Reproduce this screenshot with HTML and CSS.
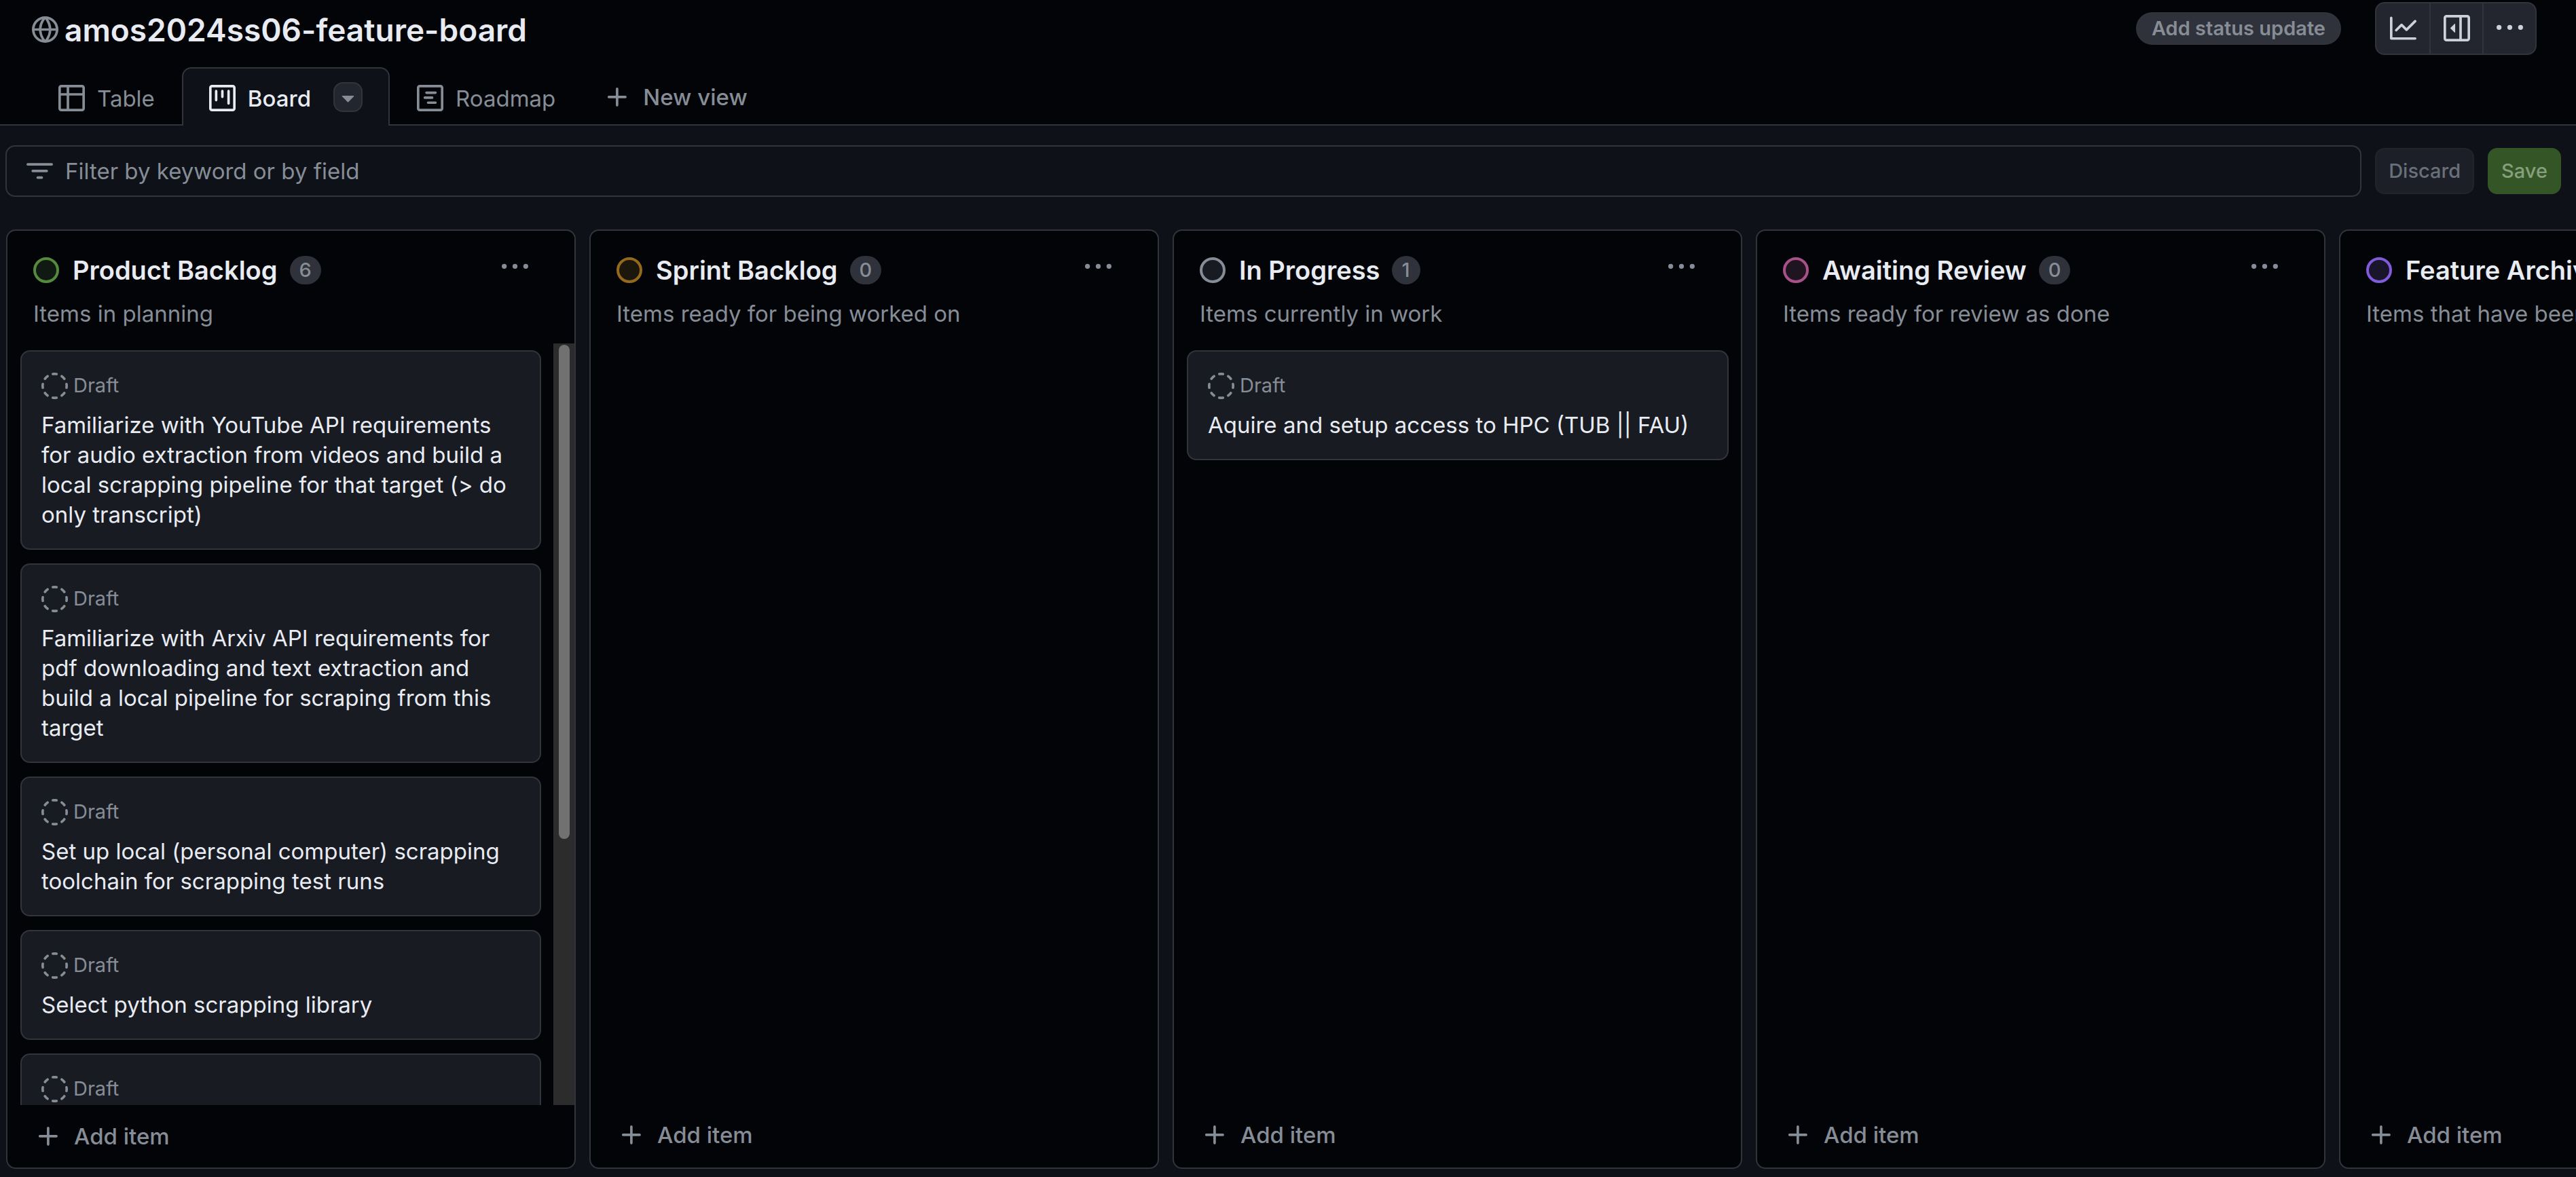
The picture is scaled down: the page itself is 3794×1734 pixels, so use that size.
FILE: index.html
```
<!DOCTYPE html>
<html lang="en">
<head>
<meta charset="utf-8">
<title>amos2024ss06-feature-board</title>
<link rel="stylesheet" href="styles.css">
</head>
<body>
<svg class="sprite" aria-hidden="true">
  <symbol id="i-globe" viewBox="0 0 16 16"><path d="M8 0a8 8 0 1 1 0 16A8 8 0 0 1 8 0ZM5.78 8.75a9.64 9.64 0 0 0 1.363 4.177c.255.426.542.832.857 1.215.245-.296.551-.705.857-1.215A9.64 9.64 0 0 0 10.22 8.75Zm4.44-1.5a9.64 9.64 0 0 0-1.363-4.177c-.307-.51-.612-.919-.857-1.215a9.927 9.927 0 0 0-.857 1.215A9.64 9.64 0 0 0 5.78 7.25Zm-5.944 1.5H1.543a6.507 6.507 0 0 0 4.666 5.5c-.123-.181-.24-.365-.352-.552-.715-1.192-1.437-2.874-1.581-4.948Zm-2.733-1.5h2.733c.144-2.074.866-3.756 1.58-4.948.12-.197.237-.381.353-.552a6.507 6.507 0 0 0-4.666 5.5Zm10.181 1.5c-.144 2.074-.866 3.756-1.58 4.948-.12.197-.237.381-.353.552a6.507 6.507 0 0 0 4.666-5.5Zm2.733-1.5a6.507 6.507 0 0 0-4.666-5.5c.123.181.24.365.353.552.714 1.192 1.436 2.874 1.58 4.948Z"/></symbol>
  <symbol id="i-table" viewBox="0 0 16 16"><path d="M0 1.75C0 .784.784 0 1.75 0h12.5C15.216 0 16 .784 16 1.75v12.5A1.75 1.75 0 0 1 14.25 16H1.75A1.75 1.75 0 0 1 0 14.25ZM6.5 6.5v8h7.75a.25.25 0 0 0 .25-.25V6.5Zm8-1.5V1.75a.25.25 0 0 0-.25-.25H6.5V5Zm-13 1.5v7.75c0 .138.112.25.25.25H5v-8ZM5 5V1.5H1.75a.25.25 0 0 0-.25.25V5Z"/></symbol>
  <symbol id="i-board" viewBox="0 0 16 16"><path d="M1.75 0h12.5C15.216 0 16 .784 16 1.75v12.5A1.75 1.75 0 0 1 14.25 16H1.75A1.75 1.75 0 0 1 0 14.25V1.75C0 .784.784 0 1.75 0ZM1.5 1.75v12.5c0 .138.112.25.25.25h12.5a.25.25 0 0 0 .25-.25V1.75a.25.25 0 0 0-.25-.25H1.75a.25.25 0 0 0-.25.25ZM11.75 3a.75.75 0 0 1 .75.75v7.5a.75.75 0 0 1-1.5 0v-7.5a.75.75 0 0 1 .75-.75Zm-8.25.75a.75.75 0 0 1 1.5 0v5.5a.75.75 0 0 1-1.5 0ZM8 3a.75.75 0 0 1 .75.75v3.5a.75.75 0 0 1-1.5 0v-3.5A.75.75 0 0 1 8 3Z"/></symbol>
  <symbol id="i-roadmap" viewBox="0 0 16 16"><path d="M4.75 7a.75.75 0 0 0 0 1.5h4.5a.75.75 0 0 0 0-1.5h-4.5ZM5 4.75A.75.75 0 0 1 5.75 4h5.5a.75.75 0 0 1 0 1.5h-5.5A.75.75 0 0 1 5 4.75ZM6.75 10a.75.75 0 0 0 0 1.5h4.5a.75.75 0 0 0 0-1.5h-4.5ZM0 1.75C0 .784.784 0 1.75 0h12.5C15.216 0 16 .784 16 1.75v12.5A1.75 1.75 0 0 1 14.25 16H1.75A1.75 1.75 0 0 1 0 14.25Zm1.75-.25a.25.25 0 0 0-.25.25v12.5c0 .138.112.25.25.25h12.5a.25.25 0 0 0 .25-.25V1.75a.25.25 0 0 0-.25-.25Z"/></symbol>
  <symbol id="i-plus" viewBox="0 0 16 16"><path d="M7.75 2a.75.75 0 0 1 .75.75V7h4.25a.75.75 0 0 1 0 1.5H8.5v4.25a.75.75 0 0 1-1.5 0V8.5H2.75a.75.75 0 0 1 0-1.5H7V2.75A.75.75 0 0 1 7.75 2Z"/></symbol>
  <symbol id="i-caret" viewBox="0 0 16 16"><path d="m4.427 7.427 3.396 3.396a.25.25 0 0 0 .354 0l3.396-3.396A.25.25 0 0 0 11.396 7H4.604a.25.25 0 0 0-.177.427Z"/></symbol>
  <symbol id="i-filter" viewBox="0 0 16 16"><path d="M.75 3h14.5a.75.75 0 0 1 0 1.5H.75a.75.75 0 0 1 0-1.5ZM3 7.75A.75.75 0 0 1 3.75 7h8.5a.75.75 0 0 1 0 1.5h-8.5A.75.75 0 0 1 3 7.75Zm3 4a.75.75 0 0 1 .75-.75h2.5a.75.75 0 0 1 0 1.5h-2.5a.75.75 0 0 1-.75-.75Z"/></symbol>
  <symbol id="i-graph" viewBox="0 0 16 16"><path d="M1.5 1.75V13.5h13.75a.75.75 0 0 1 0 1.5H.75a.75.75 0 0 1-.75-.75V1.75a.75.75 0 0 1 1.5 0Zm14.28 2.53-5.25 5.25a.75.75 0 0 1-1.06 0L7 7.06 4.28 9.78a.751.751 0 0 1-1.042-.018.751.751 0 0 1-.018-1.042l3.25-3.25a.75.75 0 0 1 1.06 0L10 7.94l4.72-4.72a.751.751 0 0 1 1.042.018.751.751 0 0 1 .018 1.042Z"/></symbol>
  <symbol id="i-sidebar" viewBox="0 0 16 16"><path d="m4.177 7.823 2.396-2.396A.25.25 0 0 1 7 5.604v4.792a.25.25 0 0 1-.427.177L4.177 8.177a.25.25 0 0 1 0-.354Z"/><path d="M0 1.75C0 .784.784 0 1.75 0h12.5C15.216 0 16 .784 16 1.75v12.5A1.75 1.75 0 0 1 14.25 16H1.75A1.75 1.75 0 0 1 0 14.25Zm1.75-.25a.25.25 0 0 0-.25.25v12.5c0 .138.112.25.25.25H9.5v-13Zm12.5 13a.25.25 0 0 0 .25-.25V1.75a.25.25 0 0 0-.25-.25H11v13Z"/></symbol>
  <symbol id="i-dots" viewBox="0 0 16 16"><path d="M8 9a1.5 1.5 0 1 0 0-3 1.5 1.5 0 0 0 0 3ZM1.5 9a1.5 1.5 0 1 0 0-3 1.5 1.5 0 0 0 0 3Zm13 0a1.5 1.5 0 1 0 0-3 1.5 1.5 0 0 0 0 3Z"/></symbol>
  <symbol id="i-draft" viewBox="0 0 16 16"><path d="M14.307 11.655a.75.75 0 0 1 .165 1.048 8.05 8.05 0 0 1-1.769 1.77.75.75 0 0 1-.883-1.214 6.552 6.552 0 0 0 1.44-1.439.75.75 0 0 1 1.047-.165Zm-2.652-9.962a.75.75 0 0 1 1.048-.165 8.05 8.05 0 0 1 1.77 1.769.75.75 0 0 1-1.214.883 6.552 6.552 0 0 0-1.439-1.44.75.75 0 0 1-.165-1.047ZM6.749.097a8.074 8.074 0 0 1 2.502 0 .75.75 0 1 1-.233 1.482 6.558 6.558 0 0 0-2.036 0A.751.751 0 0 1 6.749.097ZM.955 6.125a.75.75 0 0 1 .624.857 6.558 6.558 0 0 0 0 2.036.75.75 0 1 1-1.482.233 8.074 8.074 0 0 1 0-2.502.75.75 0 0 1 .858-.624Zm14.09 0a.75.75 0 0 1 .858.624c.13.829.13 1.673 0 2.502a.75.75 0 1 1-1.482-.233 6.558 6.558 0 0 0 0-2.036.75.75 0 0 1 .624-.857Zm-8.92 8.92a.75.75 0 0 1 .857-.624 6.558 6.558 0 0 0 2.036 0 .75.75 0 1 1 .233 1.482c-.829.13-1.673.13-2.502 0a.75.75 0 0 1-.624-.858Zm-4.432-3.39a.75.75 0 0 1 1.048.165 6.552 6.552 0 0 0 1.439 1.44.751.751 0 0 1-.883 1.212 8.05 8.05 0 0 1-1.77-1.769.75.75 0 0 1 .166-1.048Zm2.652-9.962A.75.75 0 0 1 4.18 2.74a6.556 6.556 0 0 0-1.44 1.44.751.751 0 0 1-1.212-.883 8.05 8.05 0 0 1 1.769-1.77.75.75 0 0 1 1.048.166Z"/></symbol>
</svg>

<header class="header">
  <div class="title-bar">
    <div class="title-group">
      <svg class="icon"><use href="#i-globe"/></svg>
      <h1 class="title">amos2024ss06-feature-board</h1>
    </div>
    <button class="status-button" type="button">Add status update</button>
    <div class="button-group">
      <button type="button" aria-label="Insights"><svg class="icon"><use href="#i-graph"/></svg></button>
      <button type="button" aria-label="Project details"><svg class="icon"><use href="#i-sidebar"/></svg></button>
      <button type="button" aria-label="More options"><svg class="icon"><use href="#i-dots"/></svg></button>
    </div>
  </div>
  <nav class="tabs" aria-label="Views">
    <div class="tab"><a class="tab-link" href="#table"><svg class="icon"><use href="#i-table"/></svg>Table</a></div>
    <div class="tab tab-active">
      <a class="tab-link" href="#board" aria-current="page"><svg class="icon"><use href="#i-board"/></svg>Board</a>
      <button class="caret" type="button" aria-label="View options"><svg class="icon"><use href="#i-caret"/></svg></button>
    </div>
    <div class="tab"><a class="tab-link" href="#roadmap"><svg class="icon"><use href="#i-roadmap"/></svg>Roadmap</a></div>
    <button class="new-view" type="button"><svg class="icon"><use href="#i-plus"/></svg>New view</button>
  </nav>
</header>

<main class="main">
  <form class="filter-bar">
    <label class="filter">
      <svg class="icon"><use href="#i-filter"/></svg>
      <input type="text" placeholder="Filter by keyword or by field" aria-label="Filter by keyword or by field">
    </label>
    <button class="discard" type="button">Discard</button>
    <button class="save" type="button">Save</button>
  </form>

  <div class="board">
    <section class="column green">
      <header class="column-header">
        <div class="column-heading"><span class="dot"></span><h2>Product Backlog</h2><span class="count">6</span>
          <button class="menu" type="button" aria-label="Column menu"><svg class="icon"><use href="#i-dots"/></svg></button></div>
        <p>Items in planning</p>
      </header>
      <div class="scroller">
        <div class="cards">
          <article class="card"><div class="kind"><svg class="icon"><use href="#i-draft"/></svg>Draft</div><h3>Familiarize with YouTube API requirements for audio extraction from videos and build a local scrapping pipeline for that target (&gt; do only transcript)</h3></article>
          <article class="card"><div class="kind"><svg class="icon"><use href="#i-draft"/></svg>Draft</div><h3>Familiarize with Arxiv API requirements for pdf downloading and text extraction and build a local pipeline for scraping from this target</h3></article>
          <article class="card"><div class="kind"><svg class="icon"><use href="#i-draft"/></svg>Draft</div><h3>Set up local (personal computer) scrapping toolchain for scrapping test runs</h3></article>
          <article class="card"><div class="kind"><svg class="icon"><use href="#i-draft"/></svg>Draft</div><h3>Select python scrapping library</h3></article>
          <article class="card card-tall"><div class="kind"><svg class="icon"><use href="#i-draft"/></svg>Draft</div></article>
        </div>
        <div class="scrollbar" aria-hidden="true"><div class="thumb"></div></div>
      </div>
      <button class="add-item" type="button"><svg class="icon"><use href="#i-plus"/></svg>Add item</button>
    </section>

    <section class="column amber">
      <header class="column-header">
        <div class="column-heading"><span class="dot"></span><h2>Sprint Backlog</h2><span class="count">0</span>
          <button class="menu" type="button" aria-label="Column menu"><svg class="icon"><use href="#i-dots"/></svg></button></div>
        <p>Items ready for being worked on</p>
      </header>
      <div class="cards"></div>
      <button class="add-item" type="button"><svg class="icon"><use href="#i-plus"/></svg>Add item</button>
    </section>

    <section class="column gray">
      <header class="column-header">
        <div class="column-heading"><span class="dot"></span><h2>In Progress</h2><span class="count">1</span>
          <button class="menu" type="button" aria-label="Column menu"><svg class="icon"><use href="#i-dots"/></svg></button></div>
        <p>Items currently in work</p>
      </header>
      <div class="cards">
        <article class="card"><div class="kind"><svg class="icon"><use href="#i-draft"/></svg>Draft</div><h3>Aquire and setup access to HPC (TUB || FAU)</h3></article>
      </div>
      <button class="add-item" type="button"><svg class="icon"><use href="#i-plus"/></svg>Add item</button>
    </section>

    <section class="column pink">
      <header class="column-header">
        <div class="column-heading"><span class="dot"></span><h2>Awaiting Review</h2><span class="count">0</span>
          <button class="menu" type="button" aria-label="Column menu"><svg class="icon"><use href="#i-dots"/></svg></button></div>
        <p>Items ready for review as done</p>
      </header>
      <div class="cards"></div>
      <button class="add-item" type="button"><svg class="icon"><use href="#i-plus"/></svg>Add item</button>
    </section>

    <section class="column purple">
      <header class="column-header">
        <div class="column-heading"><span class="dot"></span><h2>Feature Archive</h2></div>
        <p>Items that have been</p>
      </header>
      <div class="cards"></div>
      <button class="add-item" type="button"><svg class="icon"><use href="#i-plus"/></svg>Add item</button>
    </section>
  </div>
</main>
</body>
</html>
```
FILE: styles.css
```
:root {
  --canvas: #0e1118;
  --inset: #020408;
  --card: #181b22;
  --border: #31353b;
  --muted: #868d96;
  --text: #e8ecf2;
  --control: #23262e;
  --badge: #2f323a;
}

* { box-sizing: border-box; }

body {
  margin: 0;
  height: 100vh;
  overflow: hidden;
  display: flex;
  flex-direction: column;
  background: var(--canvas);
  color: var(--text);
  font-family: Inter, "Liberation Sans", sans-serif;
  font-size: 33px;
  line-height: 44px;
}

h1, h2, h3, p { margin: 0; }
a { color: inherit; text-decoration: none; }
button { font: inherit; color: inherit; background: none; border: 0; padding: 0; margin: 0; }
.sprite { display: none; }
.icon { width: 39px; height: 39px; flex: none; fill: currentColor; display: block; }

/* Title bar */
.header { background: var(--inset); flex: none; }
.title-bar {
  display: flex;
  align-items: center;
  height: 83px;
  padding: 0 58px 0 47px;
}
.title-group { flex: 1; display: flex; align-items: center; gap: 9px; padding-top: 4px; color: var(--muted); }
.title { font-size: 46px; font-weight: 600; line-height: 60px; color: var(--text); }
.status-button {
  height: 48px;
  padding: 0 21px;
  border: 2px solid var(--border);
  border-radius: 24px;
  background: var(--badge);
  color: var(--muted);
  font-size: 29px;
  font-weight: 600;
}
.button-group {
  display: flex;
  margin-left: 50px;
  height: 78px;
  border: 2px solid var(--border);
  border-radius: 14px;
  background: var(--control);
  color: #ccd2da;
}
.button-group button { width: 78px; display: flex; align-items: center; justify-content: center; }
.button-group button + button { border-left: 2px solid var(--border); }

/* View tabs */
.tabs {
  display: flex;
  align-items: stretch;
  height: 102px;
  padding: 16px 0 0 46px;
  color: var(--muted);
  box-shadow: inset 0 -2px var(--border);
}
.tab { display: flex; align-items: center; gap: 33px; padding: 0 38px; border: 2px solid transparent; border-bottom: 0; }
.tab-active {
  color: var(--text);
  background: var(--canvas);
  border-color: var(--border);
  border-radius: 14px 14px 0 0;
}
.tab-active .tab-link { font-weight: 500; }
.tab-link { display: flex; align-items: center; gap: 18px; padding-top: 3px; }
.caret {
  width: 43px;
  height: 44px;
  display: flex;
  align-items: center;
  justify-content: center;
  border: 2px solid var(--border);
  border-radius: 14px;
  background: var(--control);
  color: var(--muted);
}
.new-view { display: flex; align-items: center; gap: 18px; margin-left: 32px; padding-top: 2px; font-weight: 500; }

/* Filter */
.main { flex: 1; min-height: 0; display: flex; flex-direction: column; padding-top: 29px; }
.filter-bar { display: flex; align-items: center; gap: 20px; padding: 0 22px 0 8px; }
.filter {
  flex: 1;
  display: flex;
  align-items: center;
  gap: 18px;
  height: 76px;
  padding: 0 29px;
  border: 2px solid var(--border);
  border-radius: 14px;
  color: var(--muted);
}
.filter input {
  flex: 1;
  min-width: 0;
  border: 0;
  padding: 0;
  outline: 0;
  background: none;
  color: var(--text);
  font: inherit;
}
.filter input::placeholder { color: var(--muted); opacity: 1; }
.discard, .save { height: 68px; border-radius: 14px; padding: 0 18px; border: 2px solid; font-size: 29px; font-weight: 500; }
.discard { background: #1c1f27; border-color: #20242b; color: #6a707a; }
.save { background: #345626; border-color: #345626; color: #869f7d; }

/* Board */
.board { flex: 1; min-height: 0; display: flex; gap: 20px; padding: 48px 0 12px 9px; }
.column {
  flex: none;
  width: 839px;
  display: flex;
  flex-direction: column;
  border: 2px solid var(--border);
  border-radius: 14px;
  background: var(--inset);
}
.column-header { padding: 34px 38px 22px; }
.column-heading { display: flex; align-items: center; height: 48px; }
.dot { width: 38px; height: 38px; border: 4px solid var(--ring); background: var(--fill); border-radius: 50%; }
h2 { margin: 0 18px 0 20px; font-size: 38px; line-height: 48px; font-weight: 600; white-space: nowrap; }
.count {
  min-width: 42px;
  height: 42px;
  padding: 0 14px;
  border-radius: 21px;
  background: var(--badge);
  color: var(--muted);
  font-size: 29px;
  line-height: 42px;
  font-weight: 500;
}
.menu { align-self: flex-start; margin: 0 30px 0 auto; color: var(--muted); }
.column-header p { margin-top: 18px; color: var(--muted); }

.green { --ring: #558a3d; --fill: #101a13; }
.amber { --ring: #94691a; --fill: #1c170c; }
.gray { --ring: #868d96; --fill: #181b22; }
.pink { --ring: #a9508a; --fill: #1f1520; }
.purple { --ring: #805bdc; --fill: #19152a; }

.cards { flex: 1; min-height: 0; display: flex; flex-direction: column; gap: 20px; padding: 10px 18px 10px 19px; }
.scroller { flex: 1; min-height: 0; display: flex; }
.scroller .cards { overflow-y: auto; scrollbar-width: none; }
.scrollbar { flex: none; width: 31px; padding: 2px 7px 0 8px; background: #2c2c2c; }
.thumb { height: 65%; border-radius: 8px; background: #717171; }
.card {
  flex: none;
  padding: 28px 29px;
  border: 2px solid var(--border);
  border-radius: 14px;
  background: var(--card);
}
.card-tall { min-height: 320px; }
.kind { display: flex; align-items: center; gap: 8px; height: 44px; color: var(--muted); font-size: 29px; }
h3 { padding-top: 14px; font-size: 33px; line-height: 44px; font-weight: 400; }

.add-item {
  flex: none;
  display: flex;
  align-items: center;
  gap: 18px;
  height: 96px;
  padding: 0 41px;
  color: var(--muted);
  font-weight: 500;
}
.scroller + .add-item { height: 92px; }
```
